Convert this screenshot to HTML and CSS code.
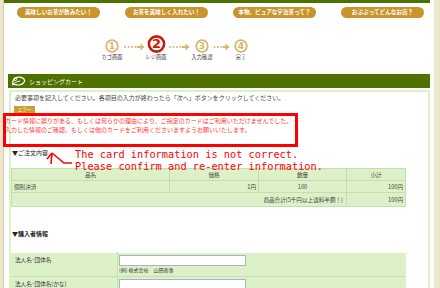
FILE: index.html
```html
<!DOCTYPE html>
<html lang="ja">
<head>
<meta charset="utf-8">
<title>ショッピングカート</title>
<link rel="stylesheet" href="styles.css">
</head>
<body>
<div class="page">
    <div class="topbar"></div>
    <ul class="nav">
        <li>美味しいお茶が飲みたい！</li>
        <li>お茶を美味しく入れたい！</li>
        <li>本物、ピュアな宇治茶って？</li>
        <li>おぶぶってどんなお店？</li>
    </ul>

    <div class="steps">
        <div class="step">
            <div class="mark"><svg width="14" height="14" viewBox="0 0 14 14"><circle cx="7" cy="7" r="5.8" fill="none" stroke="#d8b66a" stroke-width="1.8"/><text x="7" y="10.2" text-anchor="middle" class="n">1</text></svg></div>
            <span>カゴ画面</span>
        </div>
        <svg class="link" width="22" height="8" viewBox="0 0 22 8"><g fill="#d8b66a"><circle cx="2" cy="4" r="1"/><circle cx="5.5" cy="4" r="1"/><circle cx="9" cy="4" r="1"/><circle cx="12.5" cy="4" r="1"/><path d="M14 3h3.5v-2.5l4 3.5-4 3.5v-2.5h-3.5z"/></g></svg>
        <div class="step">
            <div class="mark"><svg width="19" height="18" viewBox="0 0 19 18"><circle cx="9.5" cy="9" r="7.6" fill="none" stroke="#cc1a0a" stroke-width="2.6"/><text x="9.5" y="13.2" text-anchor="middle" class="n now">2</text></svg></div>
            <span>レジ画面</span>
        </div>
        <svg class="link" width="24" height="8" viewBox="0 0 24 8"><g fill="#d8b66a"><circle cx="3" cy="4" r="1"/><circle cx="6.5" cy="4" r="1"/><circle cx="10" cy="4" r="1"/><circle cx="13.5" cy="4" r="1"/><path d="M15 3h3.5v-2.5l4 3.5-4 3.5v-2.5h-3.5z"/></g></svg>
        <div class="step">
            <div class="mark"><svg width="14" height="14" viewBox="0 0 14 14"><circle cx="7" cy="7" r="5.8" fill="none" stroke="#d8b66a" stroke-width="1.8"/><text x="7" y="10.2" text-anchor="middle" class="n">3</text></svg></div>
            <span>入力確認</span>
        </div>
        <svg class="link" width="17" height="8" viewBox="0 0 17 8"><g fill="#d8b66a"><circle cx="1.5" cy="4" r="1"/><circle cx="5" cy="4" r="1"/><circle cx="8.5" cy="4" r="1"/><path d="M10 3h2.5v-2.5l4 3.5-4 3.5v-2.5h-2.5z"/></g></svg>
        <div class="step">
            <div class="mark"><svg width="14" height="14" viewBox="0 0 14 14"><circle cx="7" cy="7" r="5.8" fill="none" stroke="#d8b66a" stroke-width="1.8"/><text x="7" y="10.2" text-anchor="middle" class="n">4</text></svg></div>
            <span>完了</span>
        </div>
    </div>

    <h2 class="cart-head">
        <svg width="15" height="10" viewBox="0 0 15 10"><path d="M2 8.5C1 5 3 1.5 7.5 1.2c3-.2 5.5 1.5 6.3 3.6-1 2.6-3.6 4.3-6.8 4.2C5 9 3.4 8.2 2 8.5z" fill="none" stroke="#fff" stroke-width="1.2"/><path d="M1 9.3C3 7 5.5 5.6 9 5" fill="none" stroke="#fff" stroke-width="1"/><circle cx="4.2" cy="3.2" r="1.4" fill="none" stroke="#fff" stroke-width=".9"/></svg>
        ショッピングカート
    </h2>

    <div class="cart">
        <p class="lead">必要事項を記入してください。各項目の入力が終わったら「次へ」ボタンをクリックしてください。</p>
        <span class="badge">エラー</span>
        <p class="err">カード情報に誤りがある、もしくは何らかの理由により、ご指定のカードはご利用いただけませんでした。<br>入力した情報のご確認、もしくは他のカードをご利用くださいますようお願いいたします。</p>

        <h3 class="sec">▼ご注文内容</h3>
        <table class="order">
            <tr><th class="c-name">品名</th><th class="c-price">価格</th><th class="c-qty">数量</th><th>小計</th></tr>
            <tr><td>個別決済</td><td class="r">1円</td><td class="m">100</td><td class="r">100円</td></tr>
            <tr class="sum"><td colspan="3" class="r">商品合計(5千円以上送料半額！)</td><td class="r">100円</td></tr>
        </table>

        <h3 class="sec strong">▼購入者情報</h3>
        <table class="form">
            <tr>
                <th>法人名･団体名</th>
                <td><input type="text"><div class="eg">(例) 株式会社　山田商事</div></td>
            </tr>
            <tr>
                <th>法人名･団体名(かな)</th>
                <td><input type="text"></td>
            </tr>
        </table>
    </div>
</div>

<div class="mark-box"></div>
<svg class="mark-arrow" width="30" height="18" viewBox="0 0 30 18"><g fill="none" stroke="#f00" stroke-width="1.6"><path d="M28 12H20L8 2"/><path d="M8 2L3 8M8 2L7 13"/></g></svg>
<p class="mark-note">The card information is not correct.<br>Please confirm and re-enter information.</p>
</body>
</html>
```

FILE: styles.css
```css
body{
    margin: 0;
    background: #efe7cd;
    font-family: "Noto Sans CJK JP", sans-serif;
    font-size: 6px;
    color: #444;
    position: relative;
    height: 288px;
    overflow: hidden;
}
.page{
    width: 430px;
    margin-left: 3px;
    border-left: 1px solid #d5cba6;
    background: #fff;
    height: 288px;
}
.topbar{
    height: 3px;
    margin-right: 4px;
    background: #4e7200;
}
.nav{
    display: flex;
    gap: 25px;
    list-style: none;
    margin: 0;
    padding: 4px 0 0 13px;
}
.nav li{
    width: 83px;
    height: 11px;
    line-height: 11px;
    border-radius: 6px;
    background: #c9942c;
    color: #fff;
    font-weight: bold;
    font-size: 5.6px;
    text-align: center;
}

.steps{
    display: flex;
    align-items: flex-start;
    margin-top: 17px;
    padding-left: 97px;
    height: 26px;
}
.step{
    width: 22px;
    display: flex;
    flex-direction: column;
    align-items: center;
    font-size: 5.2px;
    color: #333;
}
.step .mark{
    height: 18px;
    display: flex;
    align-items: flex-end;
}
.step .mark svg{display: block;}
.step span{
    white-space: nowrap;
    line-height: 7px;
}
.n{
    font-family: "DejaVu Sans", sans-serif;
    font-size: 9px;
    font-weight: bold;
    fill: #d8b66a;
}
.n.now{
    font-size: 13px;
    fill: #cc1a0a;
}
.link{margin-top: 8px;}

.cart-head{
    display: flex;
    align-items: center;
    gap: 3px;
    height: 14px;
    margin: 13px 4px 0 4px;
    padding-left: 3px;
    background: #4e7200;
    color: #fff;
    font-size: 6px;
    font-weight: normal;
}
.cart{
    margin: 2px 4px 0 5px;
    border: 2px solid #dbf1c6;
    border-bottom: none;
    padding: 1px 0 0 0;
    height: 200px;
}
.lead{
    margin: 0 0 0 4px;
    line-height: 9px;
}
.badge{
    display: block;
    margin: 4px 0 0 3px;
    width: 21px;
    height: 7px;
    line-height: 7px;
    background: #c9a02a;
    color: #fff;
    font-size: 4.5px;
    text-align: center;
    position: relative;
    z-index: 1;
}
.err{
    margin: 3px 0 0 -6px;
    line-height: 9px;
    color: #ff3434;
    white-space: nowrap;
}
.sec{
    margin: 14px 0 0 1px;
    font-size: 6px;
    font-weight: normal;
    line-height: 9px;
    color: #222;
}
.sec.strong{
    margin-top: 22px;
    font-weight: bold;
}

table{
    border-collapse: collapse;
    width: 395px;
    background: #ddf1c9;
    font-size: 5.6px;
    color: #444;
}
.order{margin-top: 11px;}
.order th, .order td{
    border: 1px solid #c6deae;
    height: 11px;
    padding: 0 2px;
    font-weight: normal;
}
.order .c-name{width: 153px;}
.order .c-price{width: 84px;}
.order .c-qty{width: 83px;}
.order .r{text-align: right;}
.order .m{text-align: center;}
.order .sum td{height: 13px;}
.order .sum td:first-child{padding-right: 3px;}

.form{margin-top: 14px;}
.form th, .form td{
    border-top: 1px solid #fff;
    border-bottom: 1px solid #c8e0b0;
    vertical-align: top;
    text-align: left;
    font-weight: normal;
    padding: 2px 0 2px 4px;
}
.form th{
    width: 102px;
    border-right: 1px solid #c8e0b0;
    padding-top: 3px;
    color: #333;
}
.form td{padding-left: 1px;}
.form input{
    display: block;
    width: 127px;
    height: 11px;
    box-sizing: border-box;
    margin: 0;
    border: 1px solid #a9b5c0;
    background: #fff;
}
.form .eg{
    font-size: 5px;
    line-height: 8px;
    color: #333;
}

/* annotation over the screenshot */
.mark-box{
    position: absolute;
    left: 3px;
    top: 113px;
    width: 289px;
    height: 28px;
    border: 3px solid #f00;
}
.mark-arrow{
    position: absolute;
    left: 44px;
    top: 151px;
}
.mark-note{
    position: absolute;
    left: 75px;
    top: 148px;
    margin: 0;
    font-family: "DejaVu Sans Mono", monospace;
    font-size: 10.3px;
    line-height: 12px;
    color: #f00;
    white-space: nowrap;
}
```
